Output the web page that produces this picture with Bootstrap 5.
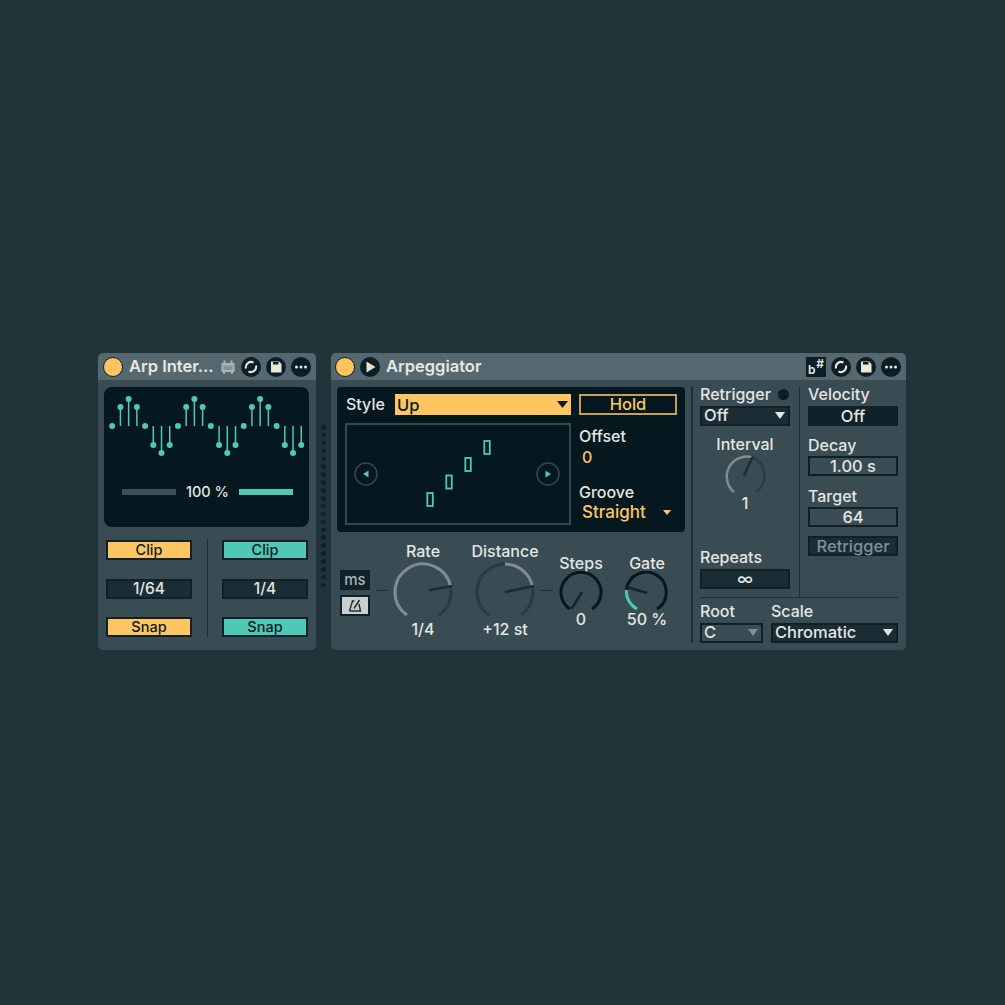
<!DOCTYPE html>
<html lang="en">
<head>
  <meta charset="UTF-8" />
  <meta name="viewport" content="width=device-width, initial-scale=1.0" />
  <title>Arpeggiator</title>
  <link href="https://cdn.jsdelivr.net/npm/bootstrap@5.3.3/dist/css/bootstrap.min.css" rel="stylesheet" />
  <style>
    body { background: #203439; font-family: "Inter", "Liberation Sans", sans-serif; font-weight: 500; font-size: 16px; line-height: 16px; color: #e4e6e2; }
    .stage { padding: 353px 0 0 98px; }
    .dev { height: 297px; background: #394b53; border-radius: 5px; overflow: hidden; flex: none; }
    .dev-left { width: 218px; }
    .dev-right { width: 575px; }
    .dev-head { height: 27px; background: #56686f; padding: 0 5px 0 5px; }
    .dev-right .dev-head { padding-left: 4px; }
    .dev-title { flex: 1 1 0; min-width: 0; font-size: 16.5px; font-weight: 600; color: #e6e8e4; margin-left: 6px; white-space: nowrap; padding-bottom: 1px; }
    .power { width: 20px; height: 20px; border-radius: 50%; background: #ffc561; border: 1px solid #0d1f26; flex: none; }
    .head-ico { width: 20px; height: 20px; flex: none; display: block; margin-left: 5px; }
    .sharp-ico { width: 20px; height: 20px; background: #0d1f26; color: #e8e8e2; font-size: 12px; line-height: 12px; font-weight: 600; flex: none; padding: 1px 2px; }
    .dots-strip { width: 15px; padding-top: 72px; gap: 3.4px; }
    .dots-strip i { width: 4.5px; height: 4.5px; border-radius: 50%; background: #0f2127; }

    .dark-panel { background: #051820; }
    .wave-panel { height: 140px; margin: 7px 7px 0 6px; border-radius: 8px; }
    .amount-row { margin-top: 17px; padding-left: 18px; font-size: 14.500px; }
    .amount-bar { width: 54px; height: 6px; background: #3c4f57; }
    .amount-bar.on { background: #4fc8b5; }
    .amount-text { width: 63px; text-align: center; }

    .split-row { margin: 11px 8px 0 8px; height: 100px; }
    .split-col { width: 86px; padding: 2px 0 1px; }
    .split-line { width: 1px; background: #1e3038; margin: 0 14.500px 0 14.500px; }
    .lv-btn { width: 100%; height: 20px; padding: 0; border-radius: 0; font-size: 16.500px; line-height: 16px; font-weight: 500; color: #0c1c22; border: 2px solid #0f2027; background: #1b2d34; }
    .lv-btn.orange { background: #ffc561; font-size: 14.500px; }
    .lv-btn.teal { background: #4fc8b5; font-size: 14.500px; }
    .lv-btn.plain { color: #e4e6e2; }
    .lv-btn.darker { background: #0f2229; padding-bottom: 2px; }
    .lv-btn.dim { color: #7f9197; }
    .lv-btn.light { background: #394b53; color: #e4e6e2; }
    .split-col .plain { font-size: 15.500px; }

    .main-left { width: 360px; flex: none; }
    .arp-panel { height: 145px; width: 348px; margin: 7px 0 0 6px; border-radius: 4px; padding: 7px 8px 0 8px; }
    .style-label { width: 50px; padding: 0 0 2px 1px; }
    .style-drop { width: 176px; height: 21px; padding: 0 3px 0 2px; background: #ffc561; color: #0c1c22; font-size: 16.500px; }
    .hold-btn { width: 98px; height: 21px; margin-left: 8px; border: 2px solid #c99f55; color: #ffc561; text-align: center; line-height: 17px; font-size: 16.500px; }
    .grid-box { width: 226px; height: 102px; margin-top: 8px; border: 2px solid #36474f; flex: none; padding: 0 9px 0 7px; }
    .note-steps { margin-top: -1px; }
    .side-col { margin: 13px 0 0 8px; }
    .side-val { color: #ffc561; padding-left: 3px; margin-top: 5px; }
    .groove-mark { margin-top: 19px; }
    .straight { width: 96px; padding-left: 3px; margin-top: 4px; font-size: 17px; }

    .knob-row { height: 117px; padding-left: 9px; }
    .ms-col { width: 30px; gap: 5px; margin-top: 4px; }
    .ms-btn { height: 20px; background: #0f2229; border: 1px solid #0f2027; color: #aab4b6; text-align: center; line-height: 17px; font-size: 15px; }
    .metro-btn { height: 21px; background: #c9cfcf; border: 2px solid #0f2027; }
    .tick { width: 12px; height: 1.500px; background: #1e3038; margin-left: 6px; flex: none; }
    .knob-col { width: 60px; flex: none; text-align: center; }
    .knob-sm { width: 44px; }
    .knob-col svg { display: block; flex: none; }
    .val-big { margin-top: -1px; padding-bottom: 1px; }
    .val-tiny { margin-top: -4px; }
    .label-big { margin-bottom: 3px; }
    .knob-first { margin-left: 5px; }
    .knob-far { margin-left: 22px; }
    .knob-next { margin-left: 6px; }

    .main-right { height: 257px; margin-top: 6px; width: 207px; border-left: 2px solid #1e3038; padding-left: 7px; flex: none; }
    .upper-cols { height: 211px; }
    .ctl-col { width: 90px; flex: none; }
    .ctl-col.divided { box-sizing: content-box; margin-left: 9px; padding-left: 8px; border-left: 1.500px solid #1e3038; }
    .mt-3px { margin-top: 3px; }
    .mt-4px { margin-top: 4px; }
    .mt-lbl { margin-top: 11px; }
    .mt-lbl2 { margin-top: 12px; }
    .led { width: 11px; height: 11px; border-radius: 50%; background: #0c1e25; margin-right: 1px; }
    .drop-in { padding: 0 3px 2px 2px; text-align: left; }
    .rule-h { height: 1px; background: #1e3038; width: 198px; }
    .root-col { width: 63px; margin-right: 8px; }
    .scale-col { width: 127px; }
    .root-lbl { margin-top: 5px; }
    .interval-lbl { margin-top: 10px; }
    .interval-knob { margin-top: 2px; flex: none; }
    .val-interval { margin-top: -3px; }
    .repeats-lbl { margin-top: 38px; }
    .retrig-btn { margin-top: 9px; }
  </style>
</head>
<body>
  <svg width="0" height="0" class="position-absolute">
    <defs>
      <g id="ico-sync"><circle cx="10" cy="10" r="10" fill="#0d1f26"/><path d="M5 11.500A5.300 5.300 0 0 1 12.500 5.500M15 8.500A5.300 5.300 0 0 1 7.500 14.500" fill="none" stroke="#e8e8e2" stroke-width="2"/></g>
      <g id="ico-save"><circle cx="10" cy="10" r="10" fill="#0d1f26"/><path d="M5 4.500h8l2.500 2.500v8.500H5z" fill="#eee6d6"/><path d="M7 5h5.500v2.500H7z" fill="#0d1f26"/></g>
      <g id="ico-more"><circle cx="10" cy="10" r="10" fill="#0d1f26"/><circle cx="5.500" cy="10" r="1.500" fill="#e8e8e2"/><circle cx="10" cy="10" r="1.500" fill="#e8e8e2"/><circle cx="14.500" cy="10" r="1.500" fill="#e8e8e2"/></g>
    </defs>
  </svg>

  <div class="stage d-flex">
    <!-- left device -->
    <div class="dev dev-left">
      <div class="dev-head d-flex align-items-center">
        <span class="power"></span>
        <span class="dev-title">Arp Inter...</span>
        <svg class="head-ico" viewBox="-2 0 20 20"><path d="M3.500 6h13v9h-13z" fill="#a9b3b3"/><path d="M5.500 8.500h9v4.500h-9z" fill="#85949a"/><path d="M6.500 3.500v3M13.500 3.500v3M6 15v2M14 15v2" stroke="#a9b3b3" stroke-width="2"/></svg>
        <svg class="head-ico" viewBox="0 0 20 20"><use href="#ico-sync"/></svg>
        <svg class="head-ico" viewBox="0 0 20 20"><use href="#ico-save"/></svg>
        <svg class="head-ico" viewBox="0 0 20 20"><use href="#ico-more"/></svg>
      </div>
      <div class="dark-panel wave-panel">
        <svg width="205" height="80" viewBox="0 0 205 80" class="d-block">
          <g id="wave" stroke="#4fc8b5" stroke-width="1.500" fill="#4fc8b5"></g>
        </svg>
        <div class="amount-row d-flex align-items-center">
          <span class="amount-bar"></span>
          <span class="amount-text">100 %</span>
          <span class="amount-bar on"></span>
        </div>
      </div>
      <div class="split-row d-flex">
        <div class="split-col d-flex flex-column justify-content-between">
          <button class="btn lv-btn orange">Clip</button>
          <div class="btn lv-btn plain">1/64</div>
          <button class="btn lv-btn orange">Snap</button>
        </div>
        <div class="split-line"></div>
        <div class="split-col d-flex flex-column justify-content-between">
          <button class="btn lv-btn teal">Clip</button>
          <div class="btn lv-btn plain">1/4</div>
          <button class="btn lv-btn teal">Snap</button>
        </div>
      </div>
    </div>

    <div id="dots" class="dots-strip d-flex flex-column align-items-center"></div>

    <!-- right device -->
    <div class="dev dev-right">
      <div class="dev-head d-flex align-items-center">
        <span class="power"></span>
        <svg class="head-ico" viewBox="0 0 20 20"><circle cx="10" cy="10" r="10" fill="#0d1f26"/><path d="M6.500 4.500l9 5.500-9 5.500z" fill="#e8e2d2"/></svg>
        <span class="dev-title">Arpeggiator</span>
        <span class="sharp-ico d-flex justify-content-between"><span class="align-self-end">b</span><span>#</span></span>
        <svg class="head-ico" viewBox="0 0 20 20"><use href="#ico-sync"/></svg>
        <svg class="head-ico" viewBox="0 0 20 20"><use href="#ico-save"/></svg>
        <svg class="head-ico" viewBox="0 0 20 20"><use href="#ico-more"/></svg>
      </div>
      <div class="d-flex">
        <div class="main-left">
          <div class="dark-panel arp-panel">
            <div class="d-flex align-items-center">
              <span class="style-label">Style</span>
              <div class="style-drop d-flex align-items-center justify-content-between"><span>Up</span><svg width="11" height="7" viewBox="0 0 12 8" preserveAspectRatio="none"><path d="M0 0h12L6 8z" fill="#0c1c22"/></svg></div>
              <div class="hold-btn">Hold</div>
            </div>
            <div class="d-flex">
              <div class="grid-box d-flex align-items-center justify-content-between">
                <svg width="24" height="24" viewBox="0 0 24 24"><circle cx="12" cy="12" r="11" fill="none" stroke="#36474f" stroke-width="1.500"/><path d="M14.500 8.500v7L9 12z" fill="#4fc8b5"/></svg>
                <svg width="70" height="70" viewBox="0 0 70 70" class="note-steps"><g fill="none" stroke="#4fc8b5" stroke-width="1.800"><rect x="5.300" y="54" width="5.500" height="13"/><rect x="24.300" y="36.500" width="5.500" height="13"/><rect x="43.300" y="19" width="5.500" height="13"/><rect x="62.300" y="2" width="5.500" height="13"/></g></svg>
                <svg width="24" height="24" viewBox="0 0 24 24"><circle cx="12" cy="12" r="11" fill="none" stroke="#36474f" stroke-width="1.500"/><path d="M9.500 8.500v7L15 12z" fill="#4fc8b5"/></svg>
              </div>
              <div class="side-col">
                <div>Offset</div>
                <div class="side-val">0</div>
                <div class="groove-mark">Groove</div>
                <div class="side-val straight d-flex align-items-center justify-content-between">Straight<svg width="8" height="5" viewBox="0 0 8 5" class="me-1"><path d="M0 0h8L4 5z" fill="#ffc561"/></svg></div>
              </div>
            </div>
          </div>
          <div class="knob-row d-flex align-items-center">
            <div class="ms-col d-flex flex-column">
              <div class="ms-btn">ms</div>
              <div class="metro-btn d-flex align-items-center justify-content-center"><svg width="16" height="15" viewBox="0 0 16 15"><path d="M2.500 13h11L12 6M2.500 13L5.500 3h2M7 10.500L12.500 2" fill="none" stroke="#1b2d34" stroke-width="1.400"/></svg></div>
            </div>
            <span class="tick"></span>
            <div class="knob-col knob-first d-flex flex-column align-items-center">
              <div class="label-big">Rate</div>
              <svg width="60" height="60" viewBox="0 0 60 60"><path d="M14 53A28 28 0 1 1 57.600 25.100" fill="none" stroke="#7f8d92" stroke-width="3"/><path d="M57.600 25.100A28 28 0 0 1 46 53" fill="none" stroke="#2a3b42" stroke-width="3"/><path d="M36 28.300L59 24" stroke="#1b2d34" stroke-width="2.500"/></svg>
              <div class="val-big">1/4</div>
            </div>
            <div class="knob-col knob-far d-flex flex-column align-items-center">
              <div class="label-big">Distance</div>
              <svg width="60" height="60" viewBox="0 0 60 60"><path d="M14 53A28 28 0 0 1 30 2" fill="none" stroke="#2a3b42" stroke-width="3"/><path d="M30 2A28 28 0 0 1 57.600 25.100" fill="none" stroke="#7f8d92" stroke-width="3"/><path d="M57.600 25.100A28 28 0 0 1 46 53" fill="none" stroke="#2a3b42" stroke-width="3"/><path d="M30 30L59 24" stroke="#1b2d34" stroke-width="2.500"/></svg>
              <div class="val-big">+12 st</div>
            </div>
            <span class="tick"></span>
            <div class="knob-col knob-sm knob-next d-flex flex-column align-items-center">
              <div>Steps</div>
              <svg width="44" height="44" viewBox="0 0 44 44"><path d="M11 38A20 20 0 1 1 33 38" fill="none" stroke="#051820" stroke-width="3"/><path d="M23 21L12.500 38" stroke="#14252c" stroke-width="2.500"/></svg>
              <div class="val-tiny">0</div>
            </div>
            <div class="knob-col knob-sm knob-far d-flex flex-column align-items-center">
              <div>Gate</div>
              <svg width="44" height="44" viewBox="0 0 44 44"><path d="M12 38A20 20 0 0 1 1.400 19" fill="none" stroke="#4fc8b5" stroke-width="3"/><path d="M1.400 19A20 20 0 1 1 32 38" fill="none" stroke="#051820" stroke-width="3"/><path d="M22 22L2 16" stroke="#14252c" stroke-width="2.500"/></svg>
              <div class="val-tiny">50 %</div>
            </div>
          </div>
        </div>
        <div class="main-right">
          <div class="upper-cols d-flex">
            <div class="ctl-col d-flex flex-column">
              <div class="d-flex align-items-center justify-content-between"><span>Retrigger</span><i class="led"></i></div>
              <div class="btn lv-btn plain drop-in d-flex align-items-center justify-content-between mt-4px"><span>Off</span><svg width="10" height="7" viewBox="0 0 12 8" preserveAspectRatio="none"><path d="M0 0h12L6 8z" fill="#e4e6e2"/></svg></div>
              <div class="text-center interval-lbl">Interval</div>
              <svg class="align-self-center interval-knob" width="44" height="44" viewBox="0 0 44 44"><path d="M11 38A20 20 0 0 1 28.700 3.200" fill="none" stroke="#7f8d92" stroke-width="2.500"/><path d="M28.700 3.200A20 20 0 0 1 33 38" fill="none" stroke="#2a3b42" stroke-width="2.500"/><path d="M21 22L29.300 3.300" stroke="#1b2d34" stroke-width="2.500"/></svg>
              <div class="text-center val-interval">1</div>
              <div class="repeats-lbl">Repeats</div>
              <div class="btn lv-btn plain mt-4px">&infin;</div>
            </div>
            <div class="ctl-col divided d-flex flex-column">
              <div>Velocity</div>
              <div class="btn lv-btn plain darker mt-4px">Off</div>
              <div class="mt-lbl">Decay</div>
              <div class="btn lv-btn light mt-3px">1.00 s</div>
              <div class="mt-lbl2">Target</div>
              <div class="btn lv-btn light mt-3px">64</div>
              <div class="btn lv-btn plain dim retrig-btn">Retrigger</div>
            </div>
          </div>
          <div class="rule-h"></div>
          <div class="d-flex">
            <div class="root-col">
              <div class="root-lbl">Root</div>
              <div class="btn lv-btn light dim drop-in d-flex align-items-center justify-content-between mt-4px"><span>C</span><svg width="10" height="7" viewBox="0 0 12 8" preserveAspectRatio="none"><path d="M0 0h12L6 8z" fill="#7f9197"/></svg></div>
            </div>
            <div class="scale-col">
              <div class="root-lbl">Scale</div>
              <div class="btn lv-btn plain drop-in d-flex align-items-center justify-content-between mt-4px"><span>Chromatic</span><svg width="10" height="7" viewBox="0 0 12 8" preserveAspectRatio="none"><path d="M0 0h12L6 8z" fill="#e4e6e2"/></svg></div>
            </div>
          </div>
        </div>
      </div>
    </div>
  </div>

  <script src="https://cdn.jsdelivr.net/npm/bootstrap@5.3.3/dist/js/bootstrap.bundle.min.js"></script>
  <script>
    // step pattern of the wave display, one cycle repeated three times
    var ys = [39, 20, 12, 20, 39, 58, 66, 58];
    var g = document.getElementById("wave");
    var out = "";
    for (var i = 0; i < 24; i++) {
      var x = 8.2 + i * 8.22;
      var y = ys[i % 8];
      out += '<path d="M' + x + ' 39V' + y + '"/><circle cx="' + x + '" cy="' + y + '" r="3" stroke="none"/>';
    }
    g.innerHTML = out;
    var dots = "";
    for (var d = 0; d < 21; d++) dots += "<i></i>";
    document.getElementById("dots").innerHTML = dots;
  </script>
</body>
</html>
